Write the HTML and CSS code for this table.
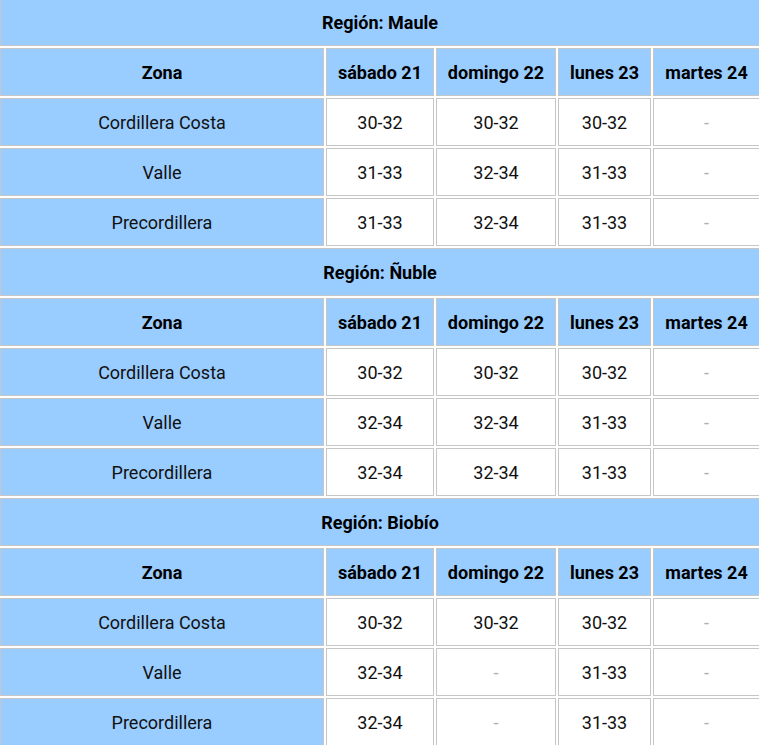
FILE: index.html
```html
<!DOCTYPE html>
<html lang="es">
<head>
<meta charset="utf-8">
<title>Temperaturas por región</title>
<link rel="stylesheet" href="styles.css">
</head>
<body>
<table class="forecast">
  <colgroup>
    <col class="c-zone"><col class="c-sat"><col class="c-sun"><col class="c-mon"><col class="c-tue">
  </colgroup>
  <tbody>
    <tr><th class="region" colspan="5">Región: Maule</th></tr>
    <tr><th>Zona</th><th>sábado 21</th><th>domingo 22</th><th>lunes 23</th><th>martes 24</th></tr>
    <tr><td class="zone">Cordillera Costa</td><td>30-32</td><td>30-32</td><td>30-32</td><td class="empty">-</td></tr>
    <tr><td class="zone">Valle</td><td>31-33</td><td>32-34</td><td>31-33</td><td class="empty">-</td></tr>
    <tr><td class="zone">Precordillera</td><td>31-33</td><td>32-34</td><td>31-33</td><td class="empty">-</td></tr>

    <tr><th class="region" colspan="5">Región: Ñuble</th></tr>
    <tr><th>Zona</th><th>sábado 21</th><th>domingo 22</th><th>lunes 23</th><th>martes 24</th></tr>
    <tr><td class="zone">Cordillera Costa</td><td>30-32</td><td>30-32</td><td>30-32</td><td class="empty">-</td></tr>
    <tr><td class="zone">Valle</td><td>32-34</td><td>32-34</td><td>31-33</td><td class="empty">-</td></tr>
    <tr><td class="zone">Precordillera</td><td>32-34</td><td>32-34</td><td>31-33</td><td class="empty">-</td></tr>

    <tr><th class="region" colspan="5">Región: Biobío</th></tr>
    <tr><th>Zona</th><th>sábado 21</th><th>domingo 22</th><th>lunes 23</th><th>martes 24</th></tr>
    <tr><td class="zone">Cordillera Costa</td><td>30-32</td><td>30-32</td><td>30-32</td><td class="empty">-</td></tr>
    <tr><td class="zone">Valle</td><td>32-34</td><td class="empty">-</td><td>31-33</td><td class="empty">-</td></tr>
    <tr><td class="zone">Precordillera</td><td>32-34</td><td class="empty">-</td><td>31-33</td><td class="empty">-</td></tr>
  </tbody>
</table>
</body>
</html>
```

FILE: styles.css
```css
html, body {
  margin: 0;
  padding: 0;
  background: #fff;
  overflow: hidden;
}

.forecast {
  margin: -4px 0 0 -2px;
  width: 764px;
  table-layout: fixed;
  border-collapse: separate;
  border-spacing: 2px;
  font-family: Roboto, "Noto Sans", sans-serif;
  font-size: 18px;
  color: #111;
}

.c-zone { width: 324px; }
.c-sat { width: 108px; }
.c-sun { width: 120px; }
.c-mon { width: 93px; }
.c-tue { width: 107px; }

.forecast th,
.forecast td {
  box-sizing: border-box;
  height: 48px;
  padding: 0;
  border: 1px solid #c6c6c6;
  text-align: center;
  vertical-align: middle;
  white-space: nowrap;
  overflow: hidden;
}

.forecast th {
  background: #99ccff;
  font-weight: 700;
  color: #000;
}

.forecast td {
  background: #fff;
  font-weight: 400;
}

.forecast td.zone {
  background: #99ccff;
}

.forecast td.empty {
  color: #b0b0b0;
}
```
